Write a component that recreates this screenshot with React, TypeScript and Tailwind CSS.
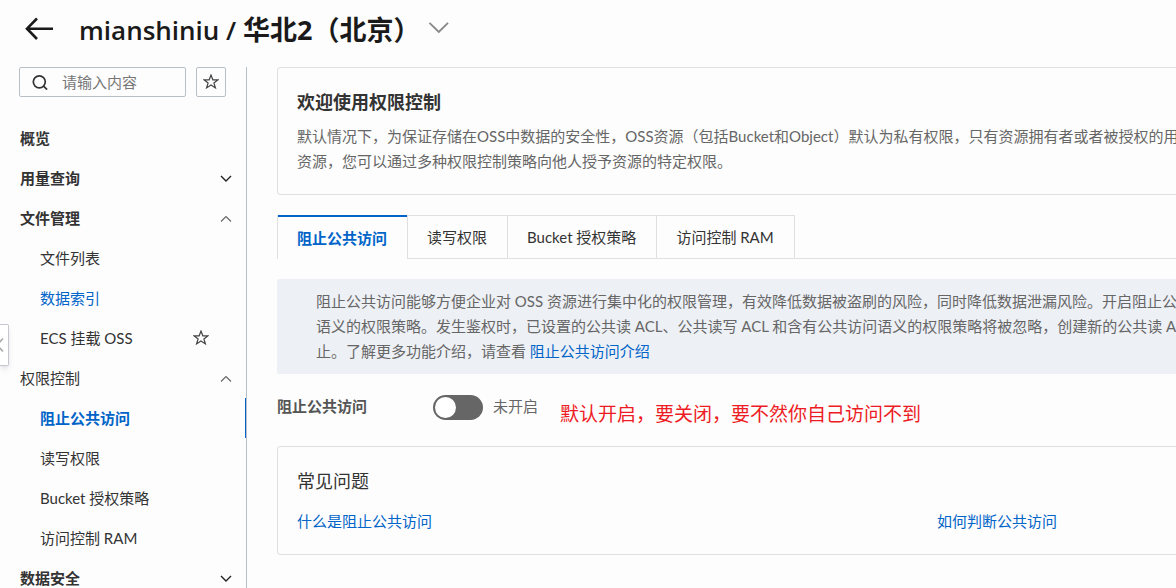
import { useState } from 'react';
import clsx from 'clsx';

interface NavItem {
  label: string;
  level: 1 | 2;
  bold?: boolean;
  arrow?: 'up' | 'down';
  star?: boolean;
  highlight?: boolean;
}

const NAV_ITEMS: NavItem[] = [
  { label: '概览', level: 1, bold: true },
  { label: '用量查询', level: 1, bold: true, arrow: 'down' },
  { label: '文件管理', level: 1, bold: true, arrow: 'up' },
  { label: '文件列表', level: 2 },
  { label: '数据索引', level: 2, highlight: true },
  { label: 'ECS 挂载 OSS', level: 2, star: true },
  { label: '权限控制', level: 1, arrow: 'up' },
  { label: '阻止公共访问', level: 2 },
  { label: '读写权限', level: 2 },
  { label: 'Bucket 授权策略', level: 2 },
  { label: '访问控制 RAM', level: 2 },
  { label: '数据安全', level: 1, bold: true, arrow: 'down' },
];

const TABS = ['阻止公共访问', '读写权限', 'Bucket 授权策略', '访问控制 RAM'];

function StarIcon() {
  return (
    <svg width="16" height="16" viewBox="0 0 16 16" fill="none" stroke="#444" strokeWidth="1.2">
      <path d="M8 1 9.8 5.8H15L10.9 8.9 12.4 13.9 8 10.9 3.6 13.9 5.1 8.9 1 5.8H6.2Z" />
    </svg>
  );
}

function SearchIcon() {
  return (
    <svg
      width="16"
      height="16"
      viewBox="0 0 16 16"
      fill="none"
      stroke="#333"
      strokeWidth="1.7"
      className="shrink-0"
    >
      <circle cx="7.3" cy="7.8" r="6" />
      <path d="m11.6 12.1 3.5 3.5" />
    </svg>
  );
}

function ArrowIcon({ direction }: { direction: 'up' | 'down' }) {
  return direction === 'down' ? (
    <svg width="12" height="12" viewBox="0 0 12 12" fill="none" stroke="#222" strokeWidth="1.4">
      <path d="M1 4 6 9 11 4" />
    </svg>
  ) : (
    <svg width="12" height="12" viewBox="0 0 12 12" fill="none" stroke="#666" strokeWidth="1.2">
      <path d="M1 9.5 6 4.5 11 9.5" />
    </svg>
  );
}

function Header() {
  return (
    <header className="flex h-[67px] shrink-0 items-start pt-2 pl-6">
      <button type="button" aria-label="返回" className="mt-2">
        <svg width="30" height="26" viewBox="0 0 30 26" fill="none" stroke="#1a1a1a" strokeWidth="2.6">
          <path d="M29 12.7H3.5M13 2.5 3 12.7 13 23" />
        </svg>
      </button>
      <h1 className="ml-[25px] font-['Open_Sans','Noto_Sans_CJK_SC',sans-serif] text-[26px] leading-11 font-semibold whitespace-nowrap text-[#1a1a1a]">
        mianshiniu / <span className="text-[27px] font-bold">华北2（北京）</span>
      </h1>
      <button type="button" aria-label="切换 Bucket" className="mt-3 ml-2">
        <svg width="22" height="16" viewBox="0 0 22 16" fill="none" stroke="#888" strokeWidth="1.8">
          <path d="M1.5 2.8 10.8 12 20 2.8" />
        </svg>
      </button>
    </header>
  );
}

function Sidebar({ active, onSelect }: { active: string; onSelect: (label: string) => void }) {
  return (
    <aside className="w-[247px] shrink-0 overflow-hidden border-r border-[#b8bfc8]">
      <div className="flex gap-2.5 pr-5 pl-[19px]">
        <label className="flex h-[30px] min-w-0 flex-1 items-center gap-3.5 rounded-xs border border-[#b8bfc8] pl-3">
          <SearchIcon />
          <input
            type="text"
            aria-label="搜索"
            placeholder="请输入内容"
            className="w-full min-w-0 bg-transparent outline-none placeholder:text-[#777]"
          />
        </label>
        <button
          type="button"
          aria-label="收藏"
          className="flex size-[30px] items-center justify-center rounded-xs border border-[#b8bfc8]"
        >
          <StarIcon />
        </button>
      </div>

      <nav className="mt-[21px]">
        {NAV_ITEMS.map((item) => (
          <a
            key={item.label}
            href="#"
            onClick={() => onSelect(item.label)}
            className={clsx(
              'flex h-10 items-center justify-between border-r',
              item.level === 1 ? 'pr-[13px] pl-5' : 'pr-9 pl-10',
              item.label === active
                ? 'border-[#0064c8] font-bold text-[#0064c8]'
                : 'border-transparent',
              item.label !== active && (item.highlight ? 'text-[#0064c8]' : 'text-[#333]'),
              item.bold && 'font-bold',
            )}
          >
            <span>{item.label}</span>
            {item.arrow && <ArrowIcon direction={item.arrow} />}
            {item.star && <StarIcon />}
          </a>
        ))}
      </nav>
    </aside>
  );
}

function WelcomeCard() {
  return (
    <section className="rounded-l border border-r-0 border-[#e0e0e0] py-5 pl-[19px]">
      <h2 className="text-lg leading-7 font-bold text-[#333]">欢迎使用权限控制</h2>
      <p className="mt-2 leading-[25px] whitespace-nowrap text-[#666]">
        默认情况下，为保证存储在OSS中数据的安全性，OSS资源（包括Bucket和Object）默认为私有权限，只有资源拥有者或者被授权的用户
        <br />
        资源，您可以通过多种权限控制策略向他人授予资源的特定权限。
      </p>
    </section>
  );
}

function TabBar({ active, onSelect }: { active: string; onSelect: (label: string) => void }) {
  return (
    <div role="tablist" className="mt-5 flex h-11">
      {TABS.map((tab) => (
        <button
          key={tab}
          type="button"
          role="tab"
          aria-selected={tab === active}
          onClick={() => onSelect(tab)}
          className="flex border-l border-[#e0e0e0] last-of-type:border-r"
        >
          <span
            className={clsx(
              'flex h-11 items-center border-[#e0e0e0] pr-5 pl-[19px] whitespace-nowrap',
              tab === active
                ? 'border-t-2 border-t-[#0064c8] font-bold text-[#0064c8]'
                : 'border-y text-[#333]',
            )}
          >
            {tab}
          </span>
        </button>
      ))}
      <div className="flex-1 border-b border-[#e0e0e0]" />
    </div>
  );
}

function Notice() {
  return (
    <div className="mt-5 rounded-l-xs bg-[#edf0f5] py-2.5 pl-[39px] leading-[25px] whitespace-nowrap text-[#666]">
      <p>
        阻止公共访问能够方便企业对 OSS 资源进行集中化的权限管理，有效降低数据被盗刷的风险，同时降低数据泄漏风险。开启阻止公
        <br />
        语义的权限策略。发生鉴权时，已设置的公共读 ACL、公共读写 ACL 和含有公共访问语义的权限策略将被忽略，创建新的公共读 ACL
        <br />
        止。了解更多功能介绍，请查看{' '}
        <a href="#" className="text-[#0064c8]">
          阻止公共访问介绍
        </a>
      </p>
    </div>
  );
}

function AccessSwitch() {
  const [enabled, setEnabled] = useState(false);

  return (
    <div className="mt-5 flex items-start whitespace-nowrap">
      <label htmlFor="block-access" className="w-[156px] leading-[25px] font-bold text-[#555]">
        阻止公共访问
      </label>
      <input
        id="block-access"
        type="checkbox"
        role="switch"
        checked={enabled}
        onChange={(e) => setEnabled(e.target.checked)}
        className="mt-px flex h-[25px] w-[50px] appearance-none rounded-full bg-[#666] p-0.5 before:size-[21px] before:rounded-full before:bg-white checked:justify-end checked:bg-[#0064c8]"
      />
      <span className="ml-2.5 leading-[25px] text-[#666]">{enabled ? '已开启' : '未开启'}</span>
      <span className="ml-[22px] pt-2 text-[19px] leading-6 text-[#ed1c24]">
        默认开启，要关闭，要不然你自己访问不到
      </span>
    </div>
  );
}

function FaqCard() {
  return (
    <section className="mt-5 rounded-l border border-r-0 border-[#e0e0e0] py-5 pl-[19px]">
      <h2 className="text-lg leading-7 text-[#333]">常见问题</h2>
      <div className="mt-3.5 grid grid-cols-[640px_1fr] leading-[25px] whitespace-nowrap text-[#0064c8]">
        <a href="#">什么是阻止公共访问</a>
        <a href="#">如何判断公共访问</a>
      </div>
    </section>
  );
}

export default function App() {
  const [active, setActive] = useState('阻止公共访问');

  return (
    <div className="relative flex h-screen flex-col overflow-hidden bg-[#fdfdfd] font-['Lato','Noto_Sans_CJK_SC',sans-serif] text-[15px]">
      <Header />
      <div className="flex min-h-0 flex-1">
        <Sidebar active={active} onSelect={setActive} />
        <main className="min-w-0 flex-1 overflow-hidden pl-[30px]">
          <WelcomeCard />
          <TabBar active={active} onSelect={setActive} />
          <Notice />
          <AccessSwitch />
          <FaqCard />
        </main>
      </div>

      {/* sidebar collapse handle, sticks to the window edge */}
      <button
        type="button"
        aria-label="收起"
        className="absolute top-[324px] left-0 flex h-[42px] w-[9px] items-center rounded-r-xs border border-l-0 border-[#c4c8ce] bg-white shadow-md"
      >
        <svg width="4" height="16" viewBox="0 0 4 16" fill="none" stroke="#aaa" strokeWidth="1.6">
          <path d="M3 1.5-3 8 3 14.5" />
        </svg>
      </button>
    </div>
  );
}
